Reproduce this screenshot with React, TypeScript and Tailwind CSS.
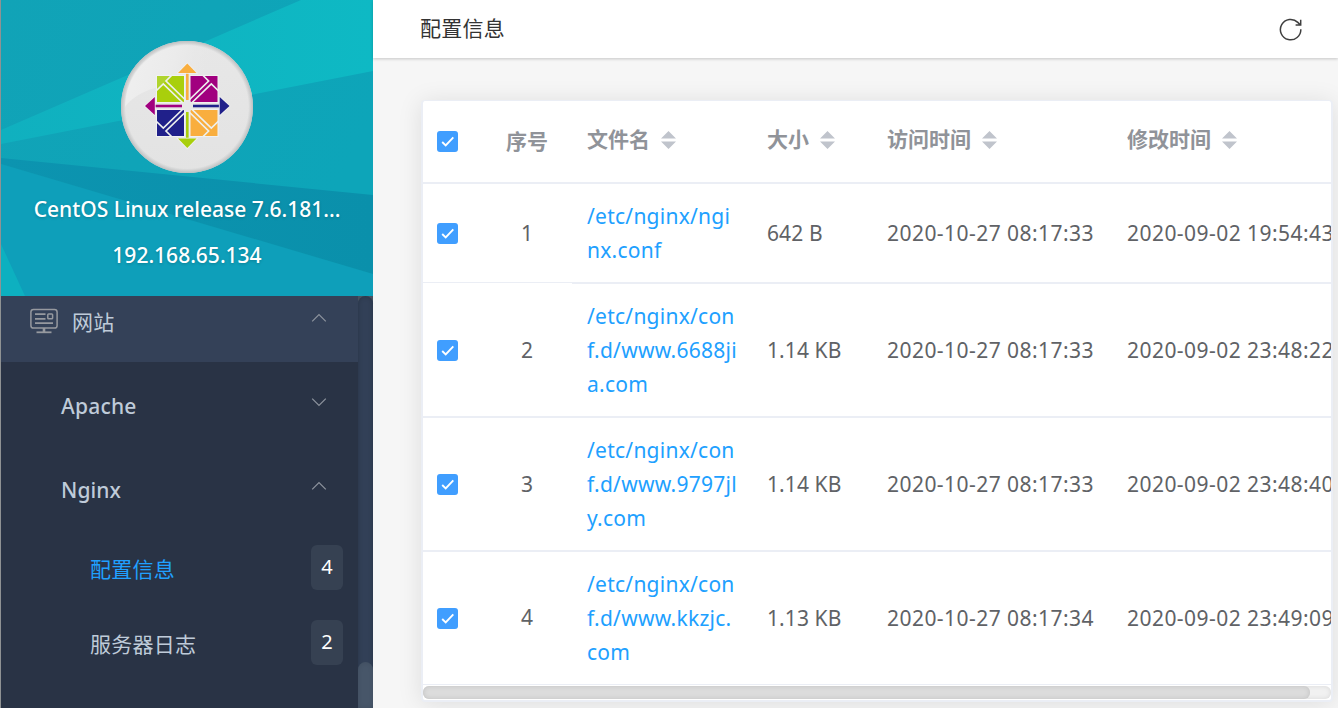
import React from 'react';

const FILES = [
  { name: ['/etc/nginx/ngi', 'nx.conf'], size: '642 B', access: '2020-10-27 08:17:33', modified: '2020-09-02 19:54:43' },
  { name: ['/etc/nginx/con', 'f.d/www.6688ji', 'a.com'], size: '1.14 KB', access: '2020-10-27 08:17:33', modified: '2020-09-02 23:48:22' },
  { name: ['/etc/nginx/con', 'f.d/www.9797jl', 'y.com'], size: '1.14 KB', access: '2020-10-27 08:17:33', modified: '2020-09-02 23:48:40' },
  { name: ['/etc/nginx/con', 'f.d/www.kkzjc.', 'com'], size: '1.13 KB', access: '2020-10-27 08:17:34', modified: '2020-09-02 23:49:09' },
];

const GRID = 'grid grid-cols-[59px_90px_180px_120px_240px_240px] w-[929px]';

const TRACKING = ['tracking-[0.250px] text-[#20a0ff]', 'tracking-[0.100px]', 'tracking-[0.450px]', 'tracking-[0.450px]'];

function Chevron({ up }: { up?: boolean }) {
  return (
    <svg width="16" height="10" viewBox="0 0 16 10" fill="none" stroke="#8b929c" strokeWidth="1.3">
      <path d={up ? 'M1.2 8.4 8 1.6l6.8 6.8' : 'M1.2 1.6 8 8.4l6.8-6.8'} />
    </svg>
  );
}

function SiteIcon() {
  return (
    <svg width="28" height="26" viewBox="0 0 28 26" fill="none" stroke="#96999f" strokeWidth="1.5">
      <rect x="0.9" y="1.5" width="26.2" height="18.5" rx="2.6" />
      <path d="M5 6.2h10.500M5 10.800h10.500M5 15.200h18" strokeWidth="1.700" />
      <rect x="17.800" y="6" width="4.800" height="4.800" rx="0.800" />
      <path d="M14 20v4" strokeWidth="2.6" />
      <path d="M6.5 24.300h15" strokeWidth="1.8" />
    </svg>
  );
}

function Logo() {
  return (
    <svg width="132" height="132" viewBox="0 0 132 132">
      <defs>
        <linearGradient id="disc" x1="0" y1="0" x2="0" y2="1">
          <stop offset="0" stopColor="#e7e7e7" />
          <stop offset="1" stopColor="#e3e3e3" />
        </linearGradient>
        <linearGradient id="gloss" x1="0" y1="0" x2="1" y2="0.2">
          <stop offset="0" stopColor="#f0f0f0" />
          <stop offset="0.500" stopColor="#ebebeb" />
          <stop offset="0.900" stopColor="#e6e6e6" stopOpacity="0" />
        </linearGradient>
        <radialGradient id="rim">
          <stop offset="0.930" stopColor="#b9bcbd" stopOpacity="0" />
          <stop offset="1" stopColor="#b9bcbd" stopOpacity="0.900" />
        </radialGradient>
      </defs>
      <circle cx="66" cy="66" r="66" fill="url(#disc)" />
      <path d="M4 66A62 62 0 0 1 66 3A62 62 0 0 1 108 20C86 43 65 42 42 45C22 49 9 58 4 66Z" fill="url(#gloss)" />
      <circle cx="66" cy="66" r="66" fill="url(#rim)" />
      <g strokeWidth="2" stroke="#f1f1f1" paintOrder="stroke">
        <path d="M36 35h27v26H36Z" fill="#a9cf0c" />
        <path d="M69.500 35h27v26h-27Z" fill="#a1007f" />
        <path d="M36 69h27v26H36Z" fill="#20208a" />
        <path d="M69.500 69h27v26h-27Z" fill="#f9ae3e" />
      </g>
      <path d="M36 35h14l-6 6-3 3-5 5Z" fill="#b0d42e" />
      <g fill="none" stroke="#eef0ee" strokeWidth="1.700">
        <path id="cut" d="M35 50 42.300 43 62 62M51 34 45 40 65 59.500" />
        <use href="#cut" transform="translate(132.600 0) scale(-1 1)" />
        <use href="#cut" transform="translate(0 130) scale(1 -1)" />
        <use href="#cut" transform="translate(132.600 130) scale(-1 -1)" />
      </g>
      <circle cx="66.300" cy="65" r="5.500" fill="#e8e8e8" />
      <g strokeWidth="2.600">
        <path d="M66.300 59V31" stroke="#f9ae3e" />
        <path d="M66.300 71V99" stroke="#a9cf0c" />
        <path d="M61 65H33" stroke="#a1007f" />
        <path d="M72 65H100" stroke="#20208a" />
      </g>
      <g stroke="#f1f1f1" strokeWidth="1.600" paintOrder="stroke">
        <path d="M66.300 22.500 75.500 32H57Z" fill="#f9ae3e" />
        <path d="M66.300 107 75.500 97.500H57Z" fill="#a9cf0c" />
        <path d="M24 65 33.800 56V74Z" fill="#a1007f" />
        <path d="M108.500 65 98.700 56V74Z" fill="#20208a" />
      </g>
    </svg>
  );
}

function Checkbox() {
  return (
    <div className="flex h-full items-center pl-3.5">
      <span className="flex size-[21px] items-center justify-center rounded-[3px] bg-[#409eff]">
        <svg width="21" height="21" viewBox="0 0 21 21" fill="none" stroke="#fff" strokeWidth="1.9">
          <path d="m5.200 11 3.500 3.400 7.600-8" />
        </svg>
      </span>
    </div>
  );
}

function HeadCell({ label }: { label: string }) {
  return (
    <div className="flex items-center gap-[11px] pl-[15px]">
      <span className="whitespace-nowrap">{label}</span>
      <svg width="15" height="18" viewBox="0 0 15 18" fill="#c0c4cc">
        <path d="M7.500 0 15 7.500H0ZM7.500 18 15 10.500H0Z" />
      </svg>
    </div>
  );
}

function Badge({ value }: { value: string }) {
  return (
    <span className="flex h-[45px] w-8 items-center justify-center rounded-md bg-[#364152] pb-px text-[20px] text-white">{value}</span>
  );
}

function Sidebar() {
  return (
    <aside className="flex h-full w-[373px] shrink-0 flex-col border-l border-[#8f9293]">
      <div className="relative h-[296px] shrink-0 overflow-hidden bg-[#0fa1b8]">
        <svg className="absolute inset-0" width="372" height="296" viewBox="0 0 372 296">
          <defs>
            <linearGradient id="top" x1="0" y1="0" x2="1" y2="0.4">
              <stop offset="0" stopColor="#11a3b7" />
              <stop offset="1" stopColor="#0da5b9" />
            </linearGradient>
            <linearGradient id="beam" x1="0" y1="0" x2="1" y2="0">
              <stop offset="0" stopColor="#10b0bf" />
              <stop offset="1" stopColor="#0eb9c4" />
            </linearGradient>
            <linearGradient id="shade" x1="0" y1="0" x2="1" y2="0">
              <stop offset="0" stopColor="#0c94b0" />
              <stop offset="1" stopColor="#0a90ab" />
            </linearGradient>
          </defs>
          <path d="M0 0H372V296H0Z" fill="url(#top)" />
          <path d="M0 130 300 0H372V71L0 144Z" fill="url(#beam)" />
          <path d="M0 164 372 274V296H0Z" fill="#0e9fba" />
          <path d="M0 158 372 195V274L0 164Z" fill="url(#shade)" />
          <path d="M0 244 24 296H0Z" fill="#0db0c0" />
        </svg>
        <div className="relative flex flex-col items-center pt-[41px] text-[21px] font-medium text-white [text-shadow:0_1px_3px_rgba(0,0,0,0.2)]">
          <Logo />
          <div className="mt-[13px] h-[46px] whitespace-nowrap leading-[46px]">CentOS Linux release 7.6.181...</div>
          <div className="h-[46px] leading-[46px]">192.168.65.134</div>
        </div>
      </div>
      <div className="flex min-h-0 flex-1">
        <nav className="flex w-[357px] shrink-0 flex-col bg-[#293345] text-[21px] text-[#bfcbd9]">
          <div className="flex h-[66px] items-start bg-[#344158] pl-[29px] pr-[31px]">
            <span className="mt-3"><SiteIcon /></span>
            <span className="ml-3.5 mt-[9px] flex-1 leading-[34px] tracking-[0.300px]">网站</span>
            <span className="mt-[17px] flex"><Chevron up /></span>
          </div>
          <div className="flex h-[84px] items-center justify-between pl-[60px] pr-[31px] pt-1">
            <span className="pt-0.5 font-medium tracking-[0.200px]">Apache</span>
            <span className="mb-2 flex"><Chevron /></span>
          </div>
          <div className="flex h-[84px] items-center justify-between pl-[60px] pr-[31px] pt-1">
            <span className="pt-0.5 font-medium tracking-[0.100px]">Nginx</span>
            <span className="mb-2 flex"><Chevron up /></span>
          </div>
          <div className="flex h-[75px] items-center justify-between pl-[89px] pr-[15px]">
            <span className="pt-1 tracking-[0.250px] text-[#20a0ff]">配置信息</span>
            <Badge value="4" />
          </div>
          <div className="flex h-[75px] items-center justify-between pl-[89px] pr-[15px]">
            <span className="pt-1 tracking-[0.250px]">服务器日志</span>
            <Badge value="2" />
          </div>
        </nav>
        <div className="flex w-[15px] flex-col justify-end bg-[#475260]">
          <div className="flex flex-1 flex-col justify-end rounded-t-[8px] bg-[#324057] shadow-[inset_0_0_5px_rgba(0,0,0,0.2)]">
            <div className="h-[46px] rounded-t-[8px] bg-[#475669] shadow-[inset_0_0_5px_rgba(0,0,0,0.1)]" />
          </div>
        </div>
      </div>
    </aside>
  );
}

export default function App() {
  return (
    <div className="flex h-[708px] w-[1338px] overflow-hidden bg-[#f6f6f6] font-['Noto_Sans','Noto_Sans_CJK_SC',sans-serif]">
      <Sidebar />
      <main className="flex min-w-0 flex-1 flex-col">
        <header className="relative flex h-[58px] shrink-0 items-center justify-between bg-white pl-[47px] pr-9 shadow-[0_1px_3px_rgba(0,0,0,0.2)]">
          <h1 className="pb-0.5 text-[21px] leading-8 tracking-[0.250px] text-[#333]">配置信息</h1>
          <svg width="23" height="23" viewBox="0 0 23 23" fill="none" stroke="#3f3f3f" strokeWidth="1.5">
            <path d="M21.800 11.200A10.200 10.200 0 1 1 18.800 4.400L21.200 6.800M21.700 1.800V7H16.600" />
          </svg>
        </header>
        <section className="ml-12 mt-[42px] h-[602px] w-[912px] rounded-[4px] border-2 border-t border-[#ebeef5] bg-white shadow-[0_2px_24px_rgba(0,0,0,0.1)]">
          <div className="h-[585px] w-[908px] overflow-hidden text-[21px] text-[#606266]">
            <div className={GRID + ' h-[83px] border-b-2 border-[#ebeef5] font-bold text-[#909399]'}>
              <Checkbox />
              <div className="flex items-center justify-center">序号</div>
              <div className="col-span-4 grid grid-cols-[180px_120px_240px_240px] pb-[3px]">
                <HeadCell label="文件名" />
                <HeadCell label="大小" />
                <HeadCell label="访问时间" />
                <HeadCell label="修改时间" />
              </div>
            </div>
            {FILES.map((f, i) => (
              <div key={f.name.join('')} className={GRID + (i === 0 ? ' h-[100px]' : i < 3 ? ' h-[134px]' : ' h-[133px]')}>
                <div className={'border-[#ebeef5] ' + (i === 0 ? 'mb-px border-b' : i < 3 ? 'border-b-2' : 'border-b')}><Checkbox /></div>
                <div className={'flex items-center justify-center border-[#ebeef5] ' + (i === 0 ? 'mb-px border-b pt-0.5' : i < 3 ? 'border-b-2 pt-0.5' : 'border-b')}>{i + 1}</div>
                {[f.name, [f.size], [f.access], [f.modified]].map((lines, c) => (
                  <div key={c} className={'flex flex-col justify-center border-[#ebeef5] pl-[15px] leading-[34px] ' + (i < 3 ? 'border-b-2' : 'border-b')}>
                    {lines.map((line) => (
                      <span key={line} className={'whitespace-nowrap ' + TRACKING[c]}>{line}</span>
                    ))}
                  </div>
                ))}
              </div>
            ))}
          </div>
          <div className="h-[13px] w-[908px] rounded-[6px] bg-[#f1f1f1] shadow-[inset_0_0_5px_rgba(0,0,0,0.1)]">
            <div className="h-[13px] w-[887px] rounded-[6px] bg-[#dcdcdc] shadow-[inset_0_0_5px_rgba(0,0,0,0.12)]" />
          </div>
        </section>
      </main>
    </div>
  );
}
